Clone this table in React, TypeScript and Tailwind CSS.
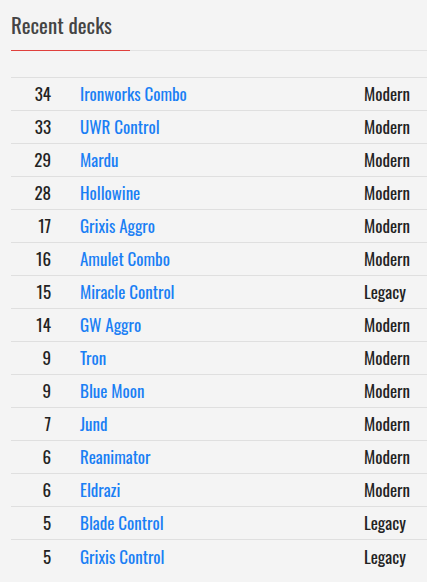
const DECKS = [
  { count: 34, name: 'Ironworks Combo', format: 'Modern' },
  { count: 33, name: 'UWR Control', format: 'Modern' },
  { count: 29, name: 'Mardu', format: 'Modern' },
  { count: 28, name: 'Hollowine', format: 'Modern' },
  { count: 17, name: 'Grixis Aggro', format: 'Modern' },
  { count: 16, name: 'Amulet Combo', format: 'Modern' },
  { count: 15, name: 'Miracle Control', format: 'Legacy' },
  { count: 14, name: 'GW Aggro', format: 'Modern' },
  { count: 9, name: 'Tron', format: 'Modern' },
  { count: 9, name: 'Blue Moon', format: 'Modern' },
  { count: 7, name: 'Jund', format: 'Modern' },
  { count: 6, name: 'Reanimator', format: 'Modern' },
  { count: 6, name: 'Eldrazi', format: 'Modern' },
  { count: 5, name: 'Blade Control', format: 'Legacy' },
  { count: 5, name: 'Grixis Control', format: 'Legacy' },
];

export default function App() {
  return (
    <div
      className="min-h-[582px] w-[427px] bg-[#f4f4f4] pl-[11px]"
      style={{ fontFamily: 'Oswald, "Roboto Condensed", sans-serif' }}
    >
      {/* Heading */}
      <div className="pt-[10px]">
        <h2 className="text-[21px] leading-[30px] font-normal text-[#444]">Recent decks</h2>
        <div className="mt-[10px] flex h-px">
          <div className="w-[119px] bg-[#e0403c]" />
          <div className="flex-1 bg-[#e2e2e2]" />
        </div>
      </div>

      {/* Table */}
      <div className="mt-[26px] border-t border-[#dfdfdf]">
        {DECKS.map((d, i) => (
          <div
            key={i}
            className={`flex h-[33px] items-center text-[17px] font-normal ${i < DECKS.length - 1 ? 'border-b border-[#dfdfdf]' : ''}`}
          >
            <span className="w-[40px] text-right text-[#222]">{d.count}</span>
            <a className="ml-[29px] flex-1 text-[#1a7ff5]">{d.name}</a>
            <span className="w-[63px] text-[#222]">{d.format}</span>
          </div>
        ))}
      </div>
    </div>
  );
}
